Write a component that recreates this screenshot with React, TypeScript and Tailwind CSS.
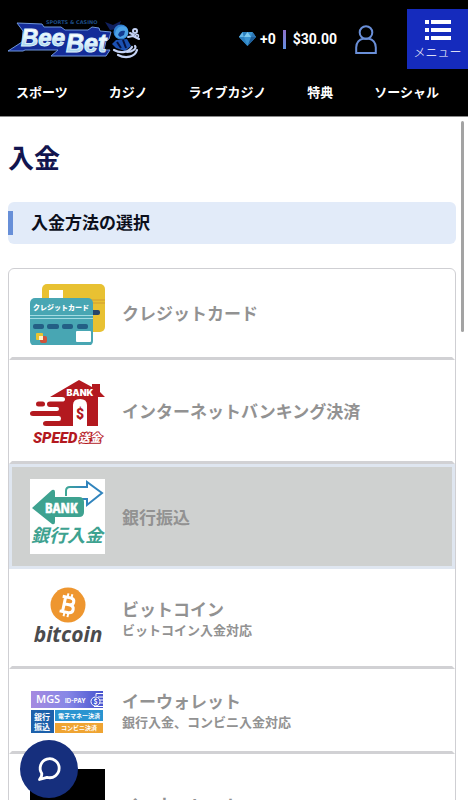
import clsx from "clsx";
import { ReactNode } from "react";

const NAV_ITEMS = ["スポーツ", "カジノ", "ライブカジノ", "特典", "ソーシャル"];

type Method = {
  id: string;
  name: string;
  note?: string;
  art: ReactNode;
  selected?: boolean;
};

const METHODS: Method[] = [
  { id: "card", name: "クレジットカード", art: <CardArt /> },
  { id: "netbank", name: "インターネットバンキング決済", art: <SpeedBankArt /> },
  { id: "bank", name: "銀行振込", art: <BankTransferArt />, selected: true },
  {
    id: "bitcoin",
    name: "ビットコイン",
    note: "ビットコイン入金対応",
    art: <BitcoinArt />,
  },
  {
    id: "mgs",
    name: "イーウォレット",
    note: "銀行入金、コンビニ入金対応",
    art: <MgsArt />,
  },
  { id: "ewallet", name: "イーウォレット", note: "銀行入金対応", art: <WalletArt /> },
];

export default function App() {
  return (
    <div className="flex h-screen flex-col overflow-hidden bg-white font-['Noto_Sans_CJK_JP','Noto_Sans',sans-serif]">
      <Header />
      <div className="relative min-h-0 flex-1">
        <main className="h-full overflow-y-auto pt-5 pr-3 pl-2 [scrollbar-width:none]">
          <h1 className="text-[26px] leading-10 font-bold text-[#12154f]">入金</h1>
          <div className="mt-[25px] flex h-[42px] items-center rounded-md bg-[#e2ebf9]">
            <span className="h-6 w-[5px] bg-[#678fd8]" />
            <h2 className="pb-[2px] pl-[18px] text-[17px] leading-6 font-bold text-[#0c0f1c]">
              入金方法の選択
            </h2>
          </div>
          <ul className="mt-6 rounded-md border border-[#cfcfd3]">
            {METHODS.map((method) => (
              <MethodRow key={method.id} method={method} />
            ))}
          </ul>
        </main>
        {/* Scroll thumb */}
        <span className="absolute top-1 right-1 h-[211px] w-[3px] rounded-full bg-[#a3a3a3]" />
      </div>
      <button
        type="button"
        aria-label="チャット"
        className="fixed bottom-[2px] left-5 flex size-[58px] items-center justify-center rounded-full bg-[#162f7d]"
      >
        <svg viewBox="0 0 26 26" className="size-[26px]" fill="none">
          <path
            d="M5.800 17.500A9.500 9.500 0 1 1 11 21.300L3.500 23.500Q6 21 5.800 17.500Z"
            stroke="#fff"
            strokeWidth="2.800"
            strokeLinejoin="round"
          />
        </svg>
      </button>
    </div>
  );
}

function Header() {
  return (
    <header className="border-b border-[#8a8a8a] bg-black pt-[9px] text-white">
      <div className="flex h-[60px] items-center">
        <a href="#" aria-label="BeeBet" className="pl-2">
          <Logo />
        </a>
        <div className="ml-auto flex items-center font-['Roboto',sans-serif] text-sm font-bold">
          <svg viewBox="0 0 17 14" className="h-[14px] w-[17px]">
            <path d="M3.500 0H13.500L17 5L8.500 14L0 5Z" fill="#3a93d0" />
            <path d="M3.500 0L5 5H0Z" fill="#66b7e6" />
            <path d="M3.500 0H8.500L5 5Z" fill="#2b7fbd" />
            <path d="M8.500 0L12 5H5Z" fill="#7cc8ee" />
            <path d="M13.500 0L17 5H12Z" fill="#2d77b5" />
            <path d="M0 5H5L8.500 14Z" fill="#2c80bf" />
            <path d="M12 5H17L8.500 14Z" fill="#1e5e99" />
          </svg>
          <span className="pl-1">+0</span>
          <span className="mx-[7px] h-[19px] w-[3px] bg-linear-to-b from-[#8d70c9] to-[#5f8fe0]" />
          <span>$30.00</span>
        </div>
        <a href="#" aria-label="アカウント" className="mr-[30px] ml-[18px]">
          <svg
            viewBox="0 0 22 29"
            className="h-[29px] w-[22px]"
            fill="none"
            stroke="#6a8fd8"
            strokeWidth="2"
          >
            <circle cx="11" cy="7.500" r="6.300" />
            <path d="M1.200 28V22.500C1.200 17.500 4.500 14.300 8 13.800H14C17.500 14.300 20.800 17.500 20.800 22.500V28Z" />
          </svg>
        </a>
        <button
          type="button"
          className="flex h-[60px] w-[61px] flex-col items-center gap-1 bg-[#152bbd] pt-[11px]"
        >
          <svg viewBox="0 0 26 20" className="h-5 w-[26px]" fill="#fff">
            <path d="M0 0H4V4H0ZM6 0H26V4H6ZM0 8H4V12H0ZM6 8H26V12H6ZM0 16H4V20H0ZM6 16H26V20H6Z" />
          </svg>
          <span className="text-xs leading-4 font-light whitespace-nowrap">メニュー</span>
        </button>
      </div>
      <nav className="flex h-[47px] items-center gap-[41px] pb-[2px] pl-4 text-[13px] font-bold whitespace-nowrap">
        {NAV_ITEMS.map((item) => (
          <a key={item} href="#">
            {item}
          </a>
        ))}
      </nav>
    </header>
  );
}

function MethodRow(props: { method: Method }) {
  const { method } = props;
  return (
    <li>
      <button
        type="button"
        aria-pressed={!!method.selected}
        className={clsx(
          method.selected
            ? "border-[#dfe6f0] bg-[#cfd1d0]"
            : "border-x-transparent border-t-0 border-b-[#d1d1d4]",
          "flex w-full items-center gap-[17px] border-3 px-[18px] py-3 text-left font-bold text-[#929292]"
        )}
      >
        {method.art}
        <span className="flex flex-col">
          <span className="text-[17px] leading-6">{method.name}</span>
          {method.note && (
            <span className="text-[13px] leading-[18px]">{method.note}</span>
          )}
        </span>
      </button>
    </li>
  );
}

function Logo() {
  return (
    <svg
      viewBox="0 0 134 44"
      className="h-11 w-[134px]"
      fontFamily="Liberation Sans, sans-serif"
      fontStyle="italic"
      fontWeight="bold"
    >
      <defs>
        <linearGradient id="letters" x1="0" y1="0" x2="0" y2="1">
          <stop offset="0.200" stopColor="#ffffff" />
          <stop offset="0.500" stopColor="#e2f4fc" />
          <stop offset="0.900" stopColor="#8fc8ea" />
        </linearGradient>
      </defs>
      <path
        d="M9 6L34 7L36 10H53L57 13H80L84 10L91 11L92 14L103 15L101 22L98 24L96 33L102 33L98 39H43L50 33H17L15 34L0 34L14 25L15 14Z"
        fill="#142c98"
        stroke="#6e96dc"
        strokeWidth="1"
      />
      <text
        x="38"
        y="7"
        fontSize="5"
        fontStyle="normal"
        fontFamily="DejaVu Sans, sans-serif"
        fill="#1d4c86"
      >
        SPORTS &amp; CASINO
      </text>
      <g fill="url(#letters)" stroke="#dcf0fa" strokeWidth="1">
        <text x="13" y="29" fontSize="24">
          Bee
        </text>
        <text x="58" y="35" fontSize="25">
          Bet
        </text>
      </g>
      <path d="M97 5L105 8L113 4L110 12L102 13Z" fill="#10205f" />
      <circle cx="113" cy="15" r="7.500" fill="#2f7fd0" />
      <path d="M107 17C108 10 113 8 118 10C122 14 120 20 115 21C111 21 107 21 107 17Z" fill="#4da3e6" />
      <path d="M110 18C111 14 114 13 117 14L116 18L112 20Z" fill="#123b91" />
      <path d="M108 23L119 22L123 29L117 34L108 31L104 27Z" fill="#1b51b2" />
      <path d="M109 25L113 31M115 23L118 31" stroke="#06123f" strokeWidth="2" />
      <g fill="none" stroke="#c5d3f5" strokeLinecap="round">
        <path d="M120 20L125 19L131 22M122 16L126 18" strokeWidth="2" />
        <circle cx="127" cy="14" r="2" strokeWidth="2" />
        <circle cx="129" cy="19" r="1.500" strokeWidth="1.500" />
        <path d="M106 33C113 37 121 35 124 30M110 38C118 42 127 40 129 33M119 35C125 35 129 31 127 29" strokeWidth="2.200" />
      </g>
    </svg>
  );
}

function CardArt() {
  return (
    <svg viewBox="0 0 75 64" className="h-16 w-[75px] shrink-0">
      <rect x="12" y="3" width="63" height="48" rx="5" fill="#e8c132" />
      <rect x="19" y="9" width="14" height="11" fill="#fff" />
      <path d="M60 19H75M60 22H75" stroke="#d09b31" />
      <rect x="57" y="29" width="13" height="5" rx="2" fill="#28456a" />
      <rect x="0" y="17" width="63" height="48" rx="5" fill="#48a6b3" />
      <path d="M0 34.500H63M0 37.500H63" stroke="#a4dbe2" />
      <text x="3" y="29" fontSize="7" fontWeight="900" fill="#fff">
        クレジットカード
      </text>
      <g fill="#235f85">
        <rect x="3" y="43" width="11" height="5" rx="2" />
        <rect x="17" y="43" width="12" height="5" rx="2" />
        <rect x="32" y="43" width="11" height="5" rx="2" />
        <rect x="47" y="43" width="11" height="5" rx="2" />
      </g>
      <rect x="6" y="52" width="7" height="7" rx="1" fill="#e9c431" />
      <rect x="10" y="55" width="7" height="7" rx="2" fill="#d0523a" />
      <rect x="9" y="55" width="4" height="4" fill="#fff2c8" />
      <rect x="46" y="50" width="15" height="11" rx="1" fill="#fff" />
    </svg>
  );
}

function SpeedBankArt() {
  return (
    <svg viewBox="0 0 75 77" className="h-[77px] w-[75px] shrink-0">
      <g fill="#b3191f">
        <path d="M20 25L49 8L62 15V12H70V20L75 25H68V54H57V33Q57 27 50 27Q43 27 43 33V54H16Q13 54 13 51.500Q13 49 16 49H29Q31 49 31 46.500Q31 44 29 44H3Q0 44 0 41.500Q0 39 3 39H27Q29 39 29 37Q29 35 27 35H20Q17 35 17 32Q17 29.500 20 29.500H32Q35 29.500 35 27.200Q35 25 32 25Z" />
        <rect x="6" y="29.500" width="9" height="5" rx="2.500" />
      </g>
      <text
        x="50"
        y="47"
        textAnchor="middle"
        fontSize="14"
        fontWeight="900"
        fontFamily="Roboto, sans-serif"
        fill="#b3191f"
      >
        $
      </text>
      <text
        x="50"
        y="24"
        textAnchor="middle"
        fontSize="9"
        fontWeight="900"
        fontFamily="Inter, sans-serif"
        fill="#fff"
      >
        BANK
      </text>
      <text
        x="3"
        y="71"
        fontSize="15"
        fontWeight="900"
        fontStyle="italic"
        fontFamily="Roboto, sans-serif"
        fill="#b3191f"
      >
        SPEED
      </text>
      <text
        x="49"
        y="70"
        fontSize="11"
        fontWeight="900"
        fontStyle="italic"
        fill="#fff"
        stroke="#b3191f"
        strokeWidth="2"
        paintOrder="stroke"
      >
        送金
      </text>
    </svg>
  );
}

function BankTransferArt() {
  return (
    <svg viewBox="0 0 75 75" className="size-[75px] shrink-0 bg-white">
      <defs>
        <linearGradient id="arrow" x1="0" y1="0" x2="1" y2="0">
          <stop offset="0" stopColor="#3fa796" />
          <stop offset="0.500" stopColor="#3184bd" />
        </linearGradient>
      </defs>
      <path
        d="M36 17V12Q36 8 40 8H57V3L72 14L57 26V20H52"
        fill="none"
        stroke="url(#arrow)"
        strokeWidth="2"
      />
      <path d="M2 29L22 11Q25 10 25 13V18H49Q54 18 54 23V33Q54 38 49 38H25V43Q25 46 22 45Z" fill="#3ea290" />
      <text
        x="15"
        y="34"
        fontSize="15"
        fontWeight="bold"
        fontFamily="Liberation Sans Narrow, Open Sans Condensed, sans-serif"
        fill="#fff"
        stroke="#fff"
        strokeWidth="0.500"
      >
        BANK
      </text>
      <text x="1" y="63" fontSize="18" fontWeight="bold" fontStyle="italic" fill="#3ea290">
        銀行入金
      </text>
    </svg>
  );
}

function BitcoinArt() {
  return (
    <svg viewBox="0 0 75 73" className="h-[73px] w-[75px] shrink-0">
      <circle cx="38" cy="24" r="17.500" fill="#ee962f" />
      <g transform="rotate(12 38 24)" fill="none" stroke="#fff">
        <path
          d="M34 16.500V31.500M31 16.500H39Q43 16.500 43 20Q43 23.500 39 23.500H34M39 23.500Q44 23.500 44 27.500Q44 31.500 39 31.500H31"
          strokeWidth="3"
        />
        <path d="M36 12.500V16M40 12.500V16M36 32V36M40 32V36" strokeWidth="2" />
      </g>
      <text
        x="38"
        y="61"
        textAnchor="middle"
        fontSize="21"
        fontWeight="bold"
        fontStyle="italic"
        fontFamily="Open Sans, sans-serif"
        fill="#4b4b4d"
      >
        bitcoin
      </text>
    </svg>
  );
}

function MgsArt() {
  return (
    <svg viewBox="0 0 75 58" className="h-[58px] w-[75px] shrink-0" fontWeight="bold">
      <defs>
        <linearGradient id="mgs" x1="0" y1="0" x2="1" y2="0">
          <stop offset="0" stopColor="#a58ae0" />
          <stop offset="0.500" stopColor="#8787e6" />
          <stop offset="1" stopColor="#4753cf" />
        </linearGradient>
      </defs>
      <rect x="1" y="10" width="72" height="17" fill="url(#mgs)" />
      <text x="6" y="22" fontSize="11" fontFamily="Open Sans, sans-serif" fontWeight="600" fill="#fff">
        MGS
      </text>
      <text x="35" y="22" fontSize="6" fontFamily="Inter, sans-serif" fill="#fff">
        ID-PAY
      </text>
      <g fill="none" stroke="#fff">
        <path d="M66 15V12.500H73M68 16H73M68 19H73M68 22H73M64 25.500H73" />
        <circle cx="65.500" cy="20.500" r="4.500" fill="#4a5ad3" />
      </g>
      <text x="65.500" y="23" textAnchor="middle" fontSize="7" fill="#fff">
        $
      </text>
      <rect x="1" y="29" width="23" height="23" fill="#1d61ab" />
      <text x="4" y="39" fontSize="8" fill="#fff">
        銀行
      </text>
      <text x="4" y="49" fontSize="8" fill="#fff">
        振込
      </text>
      <rect x="25" y="29" width="48" height="11" fill="#2a94d0" />
      <text x="49" y="37" textAnchor="middle" fontSize="6" fill="#fff">
        電子マネー決済
      </text>
      <rect x="25" y="42" width="48" height="10" fill="#efa432" />
      <text x="49" y="49" textAnchor="middle" fontSize="6" fill="#fff">
        コンビニ決済
      </text>
    </svg>
  );
}

function WalletArt() {
  return (
    <svg viewBox="0 0 75 96" className="h-24 w-[75px] shrink-0">
      <rect x="0" y="3" width="75" height="90" fill="#000" />
    </svg>
  );
}
